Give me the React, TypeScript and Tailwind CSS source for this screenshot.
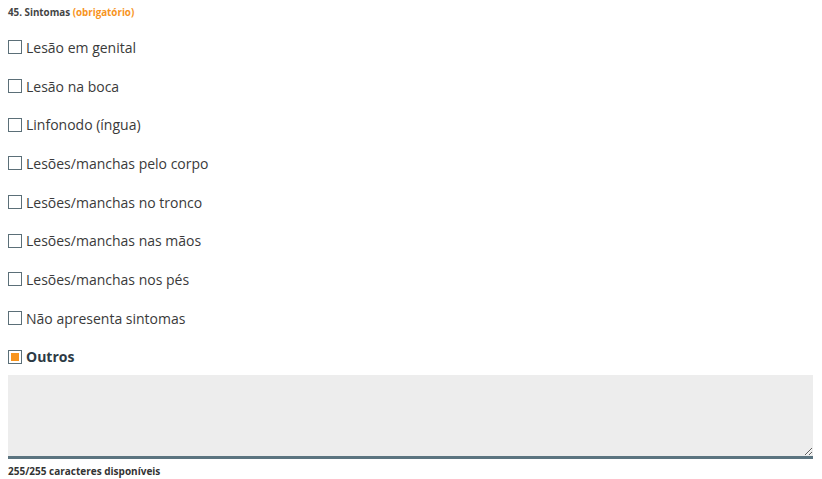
import { useState } from 'react'

const options = [
  'Lesão em genital',
  'Lesão na boca',
  'Linfonodo (íngua)',
  'Lesões/manchas pelo corpo',
  'Lesões/manchas no tronco',
  'Lesões/manchas nas mãos',
  'Lesões/manchas nos pés',
  'Não apresenta sintomas',
]

function Box({ checked }: { checked: boolean }) {
  return (
    <span className="flex h-[14px] w-[14px] shrink-0 items-center justify-center border border-[#5b6f78] bg-white">
      {checked ? <span className="h-[8px] w-[8px] bg-[#f7941d]" /> : null}
    </span>
  )
}

export default function App() {
  const [text, setText] = useState('')
  return (
    <div
      className="w-[822px] bg-white px-[8px] pt-[6px] text-[#333]"
      style={{ fontFamily: '"Open Sans", sans-serif' }}
    >
      <div className="h-[14px] text-[9.8px] font-bold leading-[14px] text-[#444]">
        45. Sintomas <span className="text-[#f7941d]">(obrigatório)</span>
      </div>
      <div className="pt-[8px]">
        {options.map((o) => (
          <label key={o} className="flex h-[38.7px] items-center gap-[4px]">
            <Box checked={false} />
            <span className="text-[14px] text-[#3a3a3a]">{o}</span>
          </label>
        ))}
        <label className="flex h-[38.7px] items-center gap-[4px]">
          <Box checked />
          <span className="text-[14px] font-bold text-[#2d3a45]">Outros</span>
        </label>
      </div>
      <textarea
        value={text}
        onChange={(e) => setText(e.target.value)}
        className="-mt-[1px] block h-[84px] w-[805px] border-b-[3px] border-[#5b7480] bg-[#ededed] outline-none"
      />
      <div className="pt-[5px] text-[10px] font-bold text-[#333]">255/255 caracteres disponíveis</div>
    </div>
  )
}
